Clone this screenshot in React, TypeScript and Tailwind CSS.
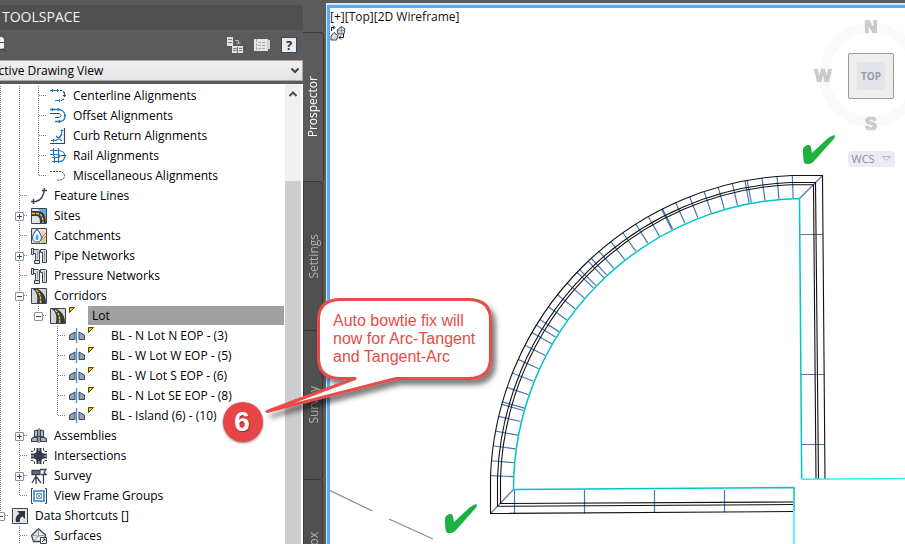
import React from "react";

type Guide = "none" | "line" | "tee" | "end";
type IconName =
  | "centerline" | "offset" | "curb" | "rail" | "misc" | "feature" | "sites" | "catchment"
  | "pipe" | "corridor" | "baseline" | "assembly" | "intersection" | "survey" | "frames"
  | "shortcut" | "surface";

interface Row {
  label: string;
  icon: IconName;
  guides: Guide[];
  box?: "+" | "-";
  flag?: boolean;
  selected?: boolean;
}

const leaf3 = (label: string, last = false): Row => ({
  label,
  icon: "baseline",
  guides: ["line", "line", "none", last ? "end" : "tee"],
  flag: true,
});

const rows: Row[] = [
  { label: "Centerline Alignments", icon: "centerline", guides: ["line", "line", "tee"] },
  { label: "Offset Alignments", icon: "offset", guides: ["line", "line", "tee"] },
  { label: "Curb Return Alignments", icon: "curb", guides: ["line", "line", "tee"] },
  { label: "Rail Alignments", icon: "rail", guides: ["line", "line", "tee"] },
  { label: "Miscellaneous Alignments", icon: "misc", guides: ["line", "line", "end"] },
  { label: "Feature Lines", icon: "feature", guides: ["line", "tee"] },
  { label: "Sites", icon: "sites", guides: ["line", "tee"], box: "+" },
  { label: "Catchments", icon: "catchment", guides: ["line", "tee"] },
  { label: "Pipe Networks", icon: "pipe", guides: ["line", "tee"], box: "+" },
  { label: "Pressure Networks", icon: "pipe", guides: ["line", "tee"] },
  { label: "Corridors", icon: "corridor", guides: ["line", "tee"], box: "-" },
  { label: "Lot", icon: "corridor", guides: ["line", "line", "end"], box: "-", flag: true, selected: true },
  leaf3("BL - N Lot N EOP - (3)"),
  leaf3("BL - W Lot W EOP - (5)"),
  leaf3("BL - W Lot S EOP - (6)"),
  leaf3("BL - N Lot SE EOP - (8)"),
  leaf3("BL - Island (6) - (10)", true),
  { label: "Assemblies", icon: "assembly", guides: ["line", "tee"], box: "+" },
  { label: "Intersections", icon: "intersection", guides: ["line", "tee"] },
  { label: "Survey", icon: "survey", guides: ["line", "tee"], box: "+" },
  { label: "View Frame Groups", icon: "frames", guides: ["line", "end"] },
  { label: "Data Shortcuts []", icon: "shortcut", guides: ["end"], box: "-" },
  { label: "Surfaces", icon: "surface", guides: ["none", "tee"] },
];

const ink = "#3c4452";
const blue = "#1b78c2";

const icons: Record<IconName, React.ReactNode> = {
  centerline: (
    <g fill="none">
      <path d="M0 2.500h9M2.500 1v3M7.500 1v3M5 12.500h5M9.500 11v3" stroke={blue} />
      <path d="M10 2.500h2M13 3.500l2 2M14.500 6v3M16 7.500h-3M14 11l-3 1.500" stroke={ink} strokeWidth="1.200" />
    </g>
  ),
  offset: (
    <g fill="none" stroke={blue}>
      <path d="M0 1.500h8c9 0 9 12 2 12H5M2.500 0v3M8.500 0v3M14 7.500h2M9.500 12v3" strokeWidth="1.300" />
      <path d="M0 5.500h8c4 0 4 4 0 4H5" stroke={ink} />
    </g>
  ),
  curb: (
    <g fill="none">
      <path d="M0 15.500h15M14.500 0v16" stroke={ink} strokeWidth="1.200" />
      <path d="M1 12.500h5c4-2 6-5 6-11M3.500 11v3M10.500 2.500h3M6 8l6 5M7 12l5-6" stroke={blue} strokeWidth="1.200" />
    </g>
  ),
  rail: (
    <g fill="none" stroke={blue}>
      <path d="M0 2.500h8c9 0 9 11 1 11H2M0 6.500h7c4 0 4 3 0 3H2M3.500 0v8M8.500 0v8M4.500 8v7M8.500 8v7" strokeWidth="1.200" />
      <path d="M11 7.500h5" stroke={ink} />
    </g>
  ),
  misc: <path d="M0 3.500h10c6 1 6 8 0 8.500H7" fill="none" stroke={ink} strokeDasharray="2 1" />,
  feature: (
    <path d="M0 13.500h5c4-1 8-5 8.500-13.500M2.500 11v5M11 2.500h5" fill="none" stroke={ink} strokeWidth="1.500" />
  ),
  sites: (
    <g>
      <path d="M.5.5h15v15H.5z" fill="#d8e4ee" stroke={ink} />
      <path d="M7 1h8v9z" fill="#5fb0ea" />
      <path d="M1 9l7 6H1z" fill="#e3e8ee" />
      <path d="M1 3h6c5 0 8 4 8 12H9c0-5-1-7-4-7H1z" fill="#363c46" />
      <path d="M1 5.500h5c4 0 6 3 6 9.500" fill="none" stroke="#f5c518" strokeWidth="1.300" strokeDasharray="3 1" />
    </g>
  ),
  catchment: (
    <g>
      <path d="M.5.5h15v15H.5z" fill="#f6d9c4" stroke={ink} />
      <path d="M8 15c1-5 5-3 7-7M11 15V9l4-4" fill="none" stroke="#e0524a" />
      <path d="M11 10l4 2v3h-5z" fill="#b9d98c" />
      <path d="M6 1C3 5 1.500 7 1.500 9.500a4.500 4.500 0 009 0C10.500 7 9 5 6 1z" fill="#f3fafd" stroke="#2c6fa6" strokeWidth="1.200" />
      <path d="M6 6c-3 4-1 6 0 6s3-2 0-6z" fill="#4ba3de" />
    </g>
  ),
  pipe: (
    <g fill="#d9dee4" stroke={ink}>
      <path d="M1.500 1.500H7c1 0 1.500.5 1.500 1.500v9.500h-4V5.500h-3z" />
      <path d="M3.500 12.500h5v3h-5zM.5.5h2v6h-2z" />
      <path d="M9.500 4.500v-3h5c1 0 1 .5 1 1.500v11.500h-4V4.500z" />
      <path d="M6.500 3v8M13.500 3v10" stroke="#8b949f" />
    </g>
  ),
  corridor: (
    <g>
      <path d="M.5.5h15v15H.5z" fill="#d3d7dc" stroke={ink} />
      <path d="M2 1h5c5 3 8 7 8 14H6C7 8 6 4 2 1z" fill="#333a44" />
      <path d="M5 2c4 3 5 6 4.500 13" fill="none" stroke="#f5c518" strokeWidth="1.500" strokeDasharray="3 1" />
    </g>
  ),
  baseline: (
    <g>
      <path d="M.5 7l5.500-3v7.500H.5zM15.500 7L10 4v7.500h5.500z" fill="#9aa3ad" stroke={ink} />
      <path d="M7.500 0v15" stroke="#2e95f0" strokeWidth="1.300" />
    </g>
  ),
  assembly: (
    <g stroke={ink}>
      <path d="M3.500 3l3-1v6.500h-3zM12.500 3l-3-1v6.500h3z" fill="#c3c9d0" strokeWidth="1.200" />
      <path d="M.5 11l2-1.500h4V13.500h-6zM15.500 11l-2-1.500h-4V13.500h6z" fill="#aeb5bd" strokeWidth="1.200" />
      <path d="M8 0v15M3 8.500h10" />
    </g>
  ),
  intersection: (
    <g>
      <path d="M5.500 0h5v3c0 1.500 1 2.500 2.500 2.500h3v5h-3c-1.500 0-2.500 1-2.500 2.500v3h-5v-3c0-1.500-1-2.500-2.500-2.500H0v-5h3C4.500 5.500 5.500 4.500 5.500 3z" fill="#343b46" />
      <path d="M3.500 0v2L2 3.500H0M12.500 0v2L14 3.500h2M3.500 16v-2L2 12.500H0M12.500 16v-2l1.500-1.500h2" fill="none" stroke={ink} />
      <path d="M8 0v3M8 13v3M0 8h3M13 8h3" stroke="#c3c9d0" />
    </g>
  ),
  survey: (
    <g fill="none" stroke={ink} strokeWidth="1.300">
      <path d="M1 2.500h8v4H1z" fill="#69717d" />
      <path d="M9 1.500h6l-2 3 2 2h-5M5 7v9M5 8l-4 7M5 8l5 7M12.500 7v9" />
    </g>
  ),
  frames: (
    <g fill="none">
      <path d="M2 .5H.5v15H2M14 .5h1.500v15H14" stroke={ink} />
      <path d="M3 3h10v10H3z" stroke="#1e88e0" strokeWidth="1.600" />
      <path d="M5.500 5.500h5v5h-5zM6 6l4 4M10 6l-4 4" stroke="#8b949f" />
    </g>
  ),
  shortcut: (
    <g>
      <path d="M.5.5h15v15H.5z" fill="#e3e6ea" stroke={ink} />
      <path d="M5 3h8v8l-2.500-2.500C8 9.500 7.500 11 8 14H4c-1-4 .5-6.500 3.500-8.500z" fill="#2f3641" />
    </g>
  ),
  surface: (
    <g fill="none" stroke={ink}>
      <path d="M.5 7.500L7.500 .8l7 6.200L13.500 13.500h-11z" fill="#eceef1" strokeWidth="1.300" />
      <path d="M7.500 1v7l-5 5M7.500 8L1 7.500M7.500 8l6.500-1" stroke="#8b949f" />
      <path d="M9.500 9.500h6v6h-6z" fill="#fff" />
      <path d="M11 14l3-3M12 11h2v2" />
    </g>
  ),
};

function GuideCell({ kind, box }: { kind: Guide; box?: "+" | "-" }) {
  return (
    <span className="relative flex h-5 w-[19px] shrink-0 items-center justify-center">
      <svg className="absolute inset-0" width="19" height="20" fill="none" stroke="#808080" strokeDasharray="1 1">
        {kind !== "none" && <path d={kind === "end" ? "M9.500 0v10" : "M9.500 0v20"} />}
        {(kind === "tee" || kind === "end") && <path d="M10 9.500h8" />}
      </svg>
      {box && (
        <button
          aria-label={box === "+" ? "Expand" : "Collapse"}
          className="relative flex size-[9px] items-center justify-center rounded-[1px] border border-[#8f8f8f] bg-white"
        >
          <svg width="5" height="5" stroke="#2b4a8c">
            <path d={box === "+" ? "M0 2.500h5M2.500 0v5" : "M0 2.500h5"} />
          </svg>
        </button>
      )}
    </span>
  );
}

function TreeRow({ row }: { row: Row }) {
  return (
    <li className="flex h-5 items-center">
      {row.guides.map((g, i) => (
        <GuideCell key={i} kind={g} box={i === row.guides.length - 1 ? row.box : undefined} />
      ))}
      <svg className="ml-0.5 shrink-0" width="16" height="16" viewBox="0 0 16 16">
        {icons[row.icon]}
      </svg>
      {row.flag && (
        <svg className="ml-[3px] shrink-0 self-start" width="16" height="8">
          <path d="M.5 1.500h5l-5 5z" fill="#ffc400" stroke="#5a4300" />
        </svg>
      )}
      <span
        className={
          row.selected
            ? "mr-px ml-[3px] h-[19px] flex-1 self-start bg-[#a0a0a0] pl-1 leading-5 whitespace-nowrap"
            : "ml-[3px] pl-1 leading-5 whitespace-nowrap"
        }
      >
        {row.label}
      </span>
    </li>
  );
}

function Toolspace() {
  return (
    <section className="flex w-[303px] shrink-0 flex-col overflow-hidden pt-[5px]">
      <h1 className="h-[25px] shrink-0 rounded-tr-sm bg-[#505050] pl-0.5 text-sm leading-6 text-[#f0f0f0]">TOOLSPACE</h1>
      <div className="flex h-[30px] shrink-0 items-center gap-[11px] pr-1.5">
        <button aria-label="Preview" className="mr-auto">
          <svg width="7" height="16" fill="none">
            <path d="M0 0h2l2 2v3H0zM0 6h4v6H0z" fill="#f2f2f2" />
            <path d="M0 5.500h4" stroke="#3c4452" />
            <path d="M0 12.500h3M2.500 11.500l4 4" stroke="#3c4452" strokeWidth="1.500" />
          </svg>
        </button>
        <button aria-label="Item tree">
          <svg width="16" height="16">
            <path d="M0 0h6v9H0zM5 9h11v7H5z" fill="#e2e2e2" />
            <path d="M1 2.500h4M1 5.500h4M6 11.500h4M12 11.500h3M6 13.500h4M12 13.500h3M10.500 10v6" stroke="#7d7d7d" />
            <path d="M8 3.500h3.500V7M9.500 5l2 2 2-2" fill="none" stroke="#b5b5b5" />
          </svg>
        </button>
        <button aria-label="Panorama">
          <svg width="16" height="14">
            <path d="M0 1h14v12H0z" fill="#e6e6e6" />
            <path d="M13 2h3v9h-3" fill="#d2d2d2" />
            <path d="M2.500 1v12M4 4.500h8M4 7.500h8M4 10.500h8" stroke="#a8a8a8" strokeDasharray="3 1" />
          </svg>
        </button>
        <button aria-label="Help" className="flex size-4 items-center justify-center border border-[#3f4652] bg-[#e9ecf1] text-[13px] leading-none font-bold text-[#2d333d]">
          ?
        </button>
      </div>
      <div className="relative h-[21px] shrink-0">
        <select
          aria-label="View"
          className="-ml-[14px] block h-[21px] w-[317px] appearance-none border border-[#a8a8a8] bg-linear-to-b from-[#f0f0f0] to-[#e4e4e4] pl-1 text-xs text-black"
        >
          <option>Active Drawing View</option>
        </select>
        <svg className="pointer-events-none absolute top-2 right-1" width="8" height="6" fill="none" stroke="#444" strokeWidth="2">
          <path d="M.5.5L4 4 7.500.5" />
        </svg>
      </div>
      <div className="mt-[3px] flex min-h-0 flex-1 bg-white pr-0.5">
        <ul className="-ml-[9px] min-w-0 flex-1 overflow-hidden pt-0.5 text-xs text-black">
          {rows.map((r) => (
            <TreeRow key={r.label} row={r} />
          ))}
        </ul>
        <div className="w-4 bg-[#f0f0f0]">
          <svg className="mx-auto mt-[7px] h-[6px] w-[8px]" width="8" height="6" fill="none" stroke="#505050" strokeWidth="2">
            <path d="M.5 5L4 1.500 7.500 5" />
          </svg>
          <div className="mt-[84px] h-full bg-[#cdcdcd]" />
        </div>
      </div>
    </section>
  );
}

function Tabs() {
  return (
    <nav className="flex w-[23px] shrink-0 flex-col overflow-hidden pt-8 pr-[3px] text-xs">
      {["Prospector", "Settings", "Survey", "Toolbox"].map((t, i) => (
        <button
          key={t}
          className={
            i === 0
              ? "flex h-[149px] w-[21px] shrink-0 items-center justify-center rounded-tr border-t border-r border-[#383838] text-white"
              : "flex h-[149px] w-5 shrink-0 items-center justify-center rounded-tr border border-b-0 border-[#383838] bg-[#505050] pl-0.5 text-[#b0b0b0]"
          }
        >
          <span className="rotate-180 [writing-mode:vertical-rl]">{t}</span>
        </button>
      ))}
    </nav>
  );
}

const CX = 803.8;
const CY = 488.8;
const OUTER = 313.6;
const INNER = 291;

/* Stations along the outer arc where the corridor sections are cut. */
const stations: [number, number][] = [
  [490.3, 475.7], [491, 460.7], [492.7, 445.7], [495.3, 431], [498.7, 416.3], [501.500, 404.3], [502, 401.7],
  [506.7, 387.3], [511.7, 372.7], [518, 359.3], [524.7, 345], [531.7, 332.3], [536, 325], [539.7, 319.3],
  [548.3, 306.7], [557.3, 294.7], [567, 283], [576.7, 272], [579.3, 269.3], [588, 261], [591, 258],
  [599, 251.3], [610.7, 241.7], [622.7, 232.7], [635.7, 224], [648.3, 216.7], [661.5, 209.3], [662.5, 209],
  [675.7, 202.7], [689.7, 197], [704, 191.3], [718, 186.7], [732.3, 183.3], [745, 181], [747.3, 180.7],
  [762, 178.3], [777, 176.7], [792.3, 175.5],
];

const ticks = stations
  .map(([x, y]) => {
    const a = Math.atan2(y - CY, x - CX);
    const c = Math.cos(a);
    const s = Math.sin(a);
    return `M${CX + c * OUTER} ${CY + s * OUTER}L${CX + c * INNER} ${CY + s * INNER}`;
  })
  .join("");

const checkPath =
  "M803 150c0-3 3-5 6-5 2 0 2 3 3 8l15-14c4-3 8-5 8-3s-2 4-4 6l-16 18c-3 4-5 4-9 4-2 0-3-3-3-14z";

function Drawing() {
  return (
    <svg className="block shrink-0" width="575" height="536" viewBox="330 8 575 536" fill="none" aria-label="Corridor plan">
      <path d="M330 490.500L372.500 511M389 519L433 539" stroke="#8a8a8a" strokeWidth="1.200" />
      <g stroke="#4a78ad" strokeWidth="1.200">
        <path d={ticks} />
        <path d="M490.500 513.500L513.500 489.500M822.500 175.500L799.500 198.500" />
        <path d="M514.500 490v23.500M584.500 490v23.500M654.500 490v23M724.500 490v22M800 234.500h23M801 374.500h23.500M802 444.500h23" />
      </g>
      <g stroke="#111" strokeWidth="1.100">
        <path d="M793 511.500L490.500 513.500V476A313.600 313.600 0 01792 175.500H822.500L825 479" />
        <path d="M793 504.500L497.500 506.300V478A306.500 306.500 0 01790 182.500H815.500L818.500 479" />
        <path d="M793 502L500.500 503.500V478A304 304 0 01790 184.700H813.500L816 479" />
      </g>
      <path d="M513.500 489.500A291 291 0 01799.500 198.500L801.700 479" stroke="#00c4c6" strokeWidth="1.500" />
      <path d="M513.500 489.500L794 487.500v24" stroke="#00c4c6" strokeWidth="1.500" />
      <path d="M794 511.500V544M801.700 479.200L905 478.500" stroke="#2af4f8" strokeWidth="1.500" />
      <g fill="#1cb141">
        <path d={checkPath} />
        <path d={checkPath} transform="translate(-358 369)" />
      </g>
      <g stroke="#3c4452">
        <path d="M337 30l4.500-3.500L345 29l-1 5h-6zM331 36l3-3.500 4 3-1.500 4.500H331z" fill="#d5dae2" />
        <path d="M338 30.500h6M341.500 27v7" stroke="#8b95a3" />
        <path d="M331.500 31v-3.500h2.500M343.500 34v3.500H339M333 25.500l2 2-2 2M341 35.500l-2 2 2 2" stroke="#111" />
      </g>
    </svg>
  );
}

function ViewCube() {
  return (
    <div className="absolute top-2 -right-6 flex w-[116px] flex-col items-center text-[#cfcfcf]">
      <div className="absolute top-2.5 size-[104px] rounded-full border-10 border-[#fafafa]" />
      <div className="relative grid h-[125px] w-full grid-cols-[20px_1fr_20px] grid-rows-[28px_1fr_28px] place-items-center font-['Liberation_Sans',Arial,sans-serif] text-lg leading-none font-bold [text-shadow:0_0_1px_#777]">
        <span className="col-start-2">N</span>
        <span className="col-start-1 row-start-2">W</span>
        <button className="col-start-2 row-start-2 flex size-[46px] items-center justify-center rounded-xs border border-[#9a9a9a] bg-[#eeeeee] [text-shadow:none]">
          <span className="flex size-7 items-center justify-center bg-[#e3e4e9] font-['Open_Sans',sans-serif] text-[10px] font-bold text-[#999ba0]">TOP</span>
        </button>
        <span className="col-start-2 row-start-3">S</span>
      </div>
      <button className="relative mt-[13px] flex h-4 w-[47px] items-center justify-between rounded-sm bg-[#ebebf4] pr-1 pl-1 text-[11px] text-[#8f8f94]">
        WCS
        <svg width="9" height="6" fill="none" stroke="#b4b8c8">
          <path d="M.5.5h8l-4 4z" />
        </svg>
      </button>
    </div>
  );
}

function Callout() {
  return (
    <div className="absolute top-[292px] left-[216px] h-[156px] w-[290px]">
      <svg className="absolute inset-0" width="290" height="156" viewBox="216 292 290 156">
        <defs>
          <filter id="shade" x="-10%" y="-10%" width="125%" height="130%">
            <feDropShadow dx="4" dy="5" stdDeviation="2.500" floodColor="#000" floodOpacity="0.5" />
          </filter>
          <filter id="soft" x="-20%" y="-20%" width="150%" height="150%">
            <feDropShadow dx="0" dy="1" stdDeviation="1" floodColor="#000" floodOpacity="0.5" />
          </filter>
        </defs>
        <path
          d="M341 299.500H468Q490.500 299.500 490.500 320V358Q490.500 378.500 468 378.500H396L267 411.500 355 378.500H341Q318.500 378.500 318.500 358V320Q318.500 299.500 341 299.500Z"
          fill="#fff"
          stroke="#e84c48"
          strokeWidth="3"
          strokeLinejoin="round"
          filter="url(#shade)"
        />
        <circle cx="243" cy="422" r="20" fill="#e54447" filter="url(#soft)" />
      </svg>
      <p className="relative pt-5 pl-[117px] font-['Liberation_Sans',Arial,sans-serif] text-base leading-[18px] whitespace-nowrap text-[#e64b48]">
        Auto bowtie fix will
        <br />
        now for Arc-Tangent
        <br />
        and Tangent-Arc
      </p>
      <span className="absolute top-[110px] left-[6px] flex size-10 items-center justify-center font-['Liberation_Sans',Arial,sans-serif] text-[28px] leading-none font-bold text-white [text-shadow:1px_1px_1px_#00000055]">
        6
      </span>
    </div>
  );
}

export default function App() {
  return (
    <div className="relative flex h-screen overflow-hidden bg-[#5b5b5b] font-['Open_Sans','Noto_Sans',sans-serif]">
      <Toolspace />
      <Tabs />
      <main className="relative mt-[3px] min-w-0 flex-1 overflow-hidden border-t-2 border-l border-[#d6e9ff] bg-white">
        <div className="h-full border-t-3 border-l-3 border-[#58a9fb]">
          <Drawing />
        </div>
        <p className="absolute top-1 left-[3px] text-xs leading-4 text-[#111]">[+][Top][2D Wireframe]</p>
        <ViewCube />
      </main>
      <Callout />
    </div>
  );
}
